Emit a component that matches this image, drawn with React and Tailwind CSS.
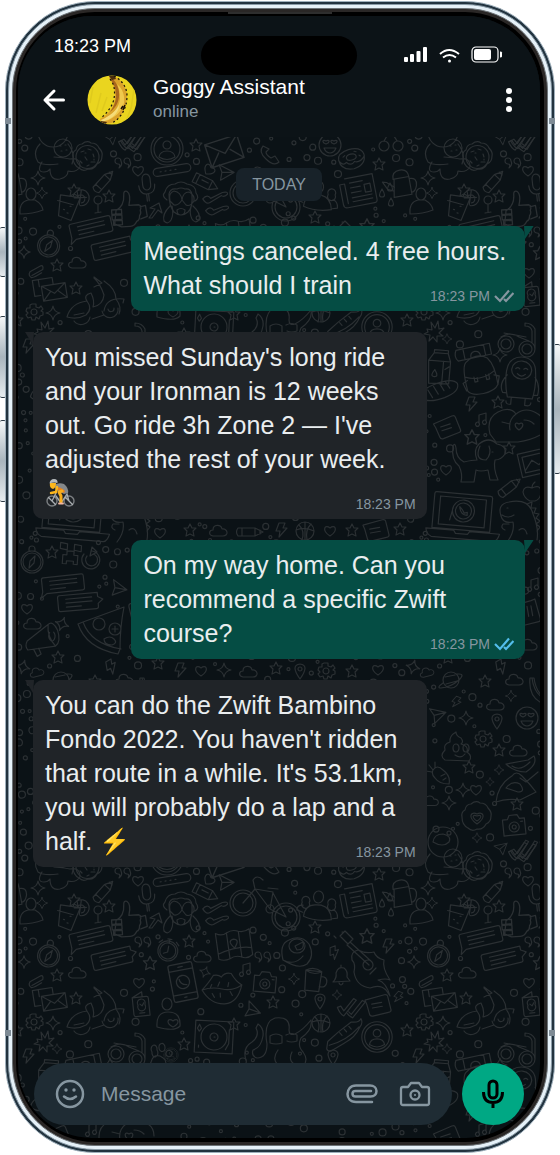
import React from "react";

const MESSAGES = [
  { id: 1, from: "me", text: "Meetings canceled. 4 free hours. What should I train", time: "18:23 PM", ticks: "text-[#8696a0]" },
  { id: 2, from: "bot", text: "You missed Sunday's long ride and your Ironman is 12 weeks out. Go ride 3h Zone 2 — I've adjusted the rest of your week.", rider: true, time: "18:23 PM" },
  { id: 3, from: "me", text: "On my way home. Can you recommend a specific Zwift course?", time: "18:23 PM", ticks: "text-[#53bdeb]" },
  { id: 4, from: "bot", text: "You can do the Zwift Bambino Fondo 2022. You haven't ridden that route in a while. It's 53.1km, you will probably do a lap and a half. ⚡", time: "18:23 PM" },
];

/* ---------- wallpaper ---------- */

// shape name -> [radius kept free of dots, path data around 0,0]
const SHAPES = {
  star: [8, "M0-6l2 4 4 0-3 3 1 5-4-2-4 2 1-5-3-3 4 0z"],
  sparkle: [8, "M0-7q1 6 7 7-6 1-7 7-1-6-7-7 6-1 7-7z"],
  heart: [7, "M0 5C-9-1-5-7 0-3 5-7 9-1 0 5z"],
  cloud: [11, "M-7 5c-5-1-4-6 0-6 0-6 8-6 9-1 6-1 7 7 1 7z"],
  bolt: [8, "M-2-7l6 0-2 5 4 0-8 9 1-6-4 0z"],
  plane: [9, "M-8-6l16 5-12 10 0-8zM8-1l-12 2"],
  quotes: [8, "M-2-3a3 3 0 1 0-3 3q3 0 1 4q4-3 2-7zM7-3a3 3 0 1 0-3 3q3 0 1 4q4-3 2-7z"],
  bar: [19, "M-15-4h30a4 4 0 0 1 0 8h-30a4 4 0 0 1 0-8zM-12 0h1M-7 0h1M-2 0h1M3 0h1"],
  profile: [17, "M-16 0a16 16 0 1 0 32 0a16 16 0 1 0-32 0M-13 0a13 13 0 1 0 26 0a13 13 0 1 0-26 0M-4-4a4 4 0 1 0 8 0a4 4 0 1 0-8 0M-8 8q1-6 8-6t8 6q-8 5-16 0"],
  cookie: [17, "M-15 0q-1-5 3-7 1-6 6-6 5-4 9-1 6 0 8 5 4 4 3 8 0 6-5 8-3 6-9 5-5 3-9-1-6-3-6-11zM-12 0a11 11 0 1 0 23 0a11 11 0 1 0-23 0M-7-5l3-1M0-8l3 1M5-3l1 3M-3 0l2 3M-8 4l2 2M3 5l4 0M-1 9l2-1M-3-4l1 0M6 3l0-1"],
  envelope: [18, "M-14-9h28v20h-28zM-14-9l14 12 14-12M-14 11l9-10M14 11l-9-10"],
  envelopes: [18, "M-10-5v-7h-6v16h6M-10-12h14v6M-8-5h24v15h-24zM-8-5l12 9 12-9M-8 10l8-8M16 10l-8-8"],
  handset: [12, "M-9-9q-5 6 3 13 8 8 13 3l-4-6-4 2q-5-3-5-6l3-3z"],
  pencil: [13, "M-12-4h17l8 4-8 4h-17q-3-4 0-8zM5-4v8M-8-4v8M10-2v4"],
  crayon: [14, "M-13-5h18l8 5-8 5h-18zM-9-5v10M5-5v10M-5-1h7"],
  mic: [13, "M-4-9a4 5 0 0 1 8 0v6a4 5 0 0 1-8 0zM-8-3q0 9 8 9t8-9M-1 6v7M1 6v7"],
  monkey: [21, "M-14-2q-6-4-2-8 2-8 10-8 6-4 12 0 9 1 9 9 4 5-1 8M-12-8q1-6 8-5 4-2 8 0 6-1 7 6 1 12-4 17-7 6-14 0-5-6-5-18M-11-1q-2-8 4-10 7 1 8 9-4 6-8 5zM1-2q1-8 7-8 6 3 5 9-4 6-8 4zM-4 8q4-3 8 0 0 5-4 5t-4-5zM-11 4q-8 8-6 15 4 4 7-1 3-6 1-14M12 4q8 7 6 14-4 4-7-1-3-6-1-12"],
  bike: [32, "M-30 6a13 13 0 1 0 26 0a13 13 0 1 0-26 0M-27 6a10 10 0 1 0 20 0a10 10 0 1 0-20 0M12 20a14 14 0 1 0 28 0a14 14 0 1 0-28 0M15 20a11 11 0 1 0 22 0a11 11 0 1 0-22 0M-17 6l12-14 15 20 16 8M-5-8l18 3-3 17M-5-8l-2-9q4-6 10 0M8-9l10 1M26 20l-13-24M6 12a4 4 0 1 0 8 0a4 4 0 1 0-8 0"],
  person: [14, "M-5-8a5 6 0 1 0 10 0a5 6 0 1 0-10 0M-11 12q-1-12 8-14l7 0q7 4 8 10-10 4-23 4z"],
  personHeart: [15, "M-7-11a5 6 0 1 0 10 0a5 6 0 1 0-10 0M-12 12q-1-15 11-15 13 0 12 14-5 6-23 1zM4 12c-8-4-5-10 0-6 5-4 8 2 0 6z"],
  people: [22, "M-5-10a5 6 0 1 0 10 0a5 6 0 1 0-10 0M-14 10q1-12 12-12h5q10 2 11 14q-16 3-28-2zM-16-4a4 4 0 1 0 7 0a4 4 0 1 0-7 0M10-3a4 4 0 1 0 7 0a4 4 0 1 0-7 0M-15 6l-6-2q0-5 6-5M15 11l5-1q0-7-5-8"],
  drink: [17, "M-9-10h20l-6 24-13-3zM-11-4l16 2M-4 4h1M2 0h1M0 7h1M4-11a8 8 0 1 1 8 9M8-10a4 4 0 1 1 5 5M11-17v14M5-9l12-2"],
  wine: [7, "M-4-5a4 4 0 1 0 8 0a4 4 0 1 0-8 0M0-1v8M-3 8l6-1"],
  thumb: [18, "M-10 0q8-4 8-14 0-4 3-3 4 3 1 13h9q3 1 1 5 1 3-1 5 0 4-3 5-2 4-6 4h-8l-6-3zM-14-1h9v4h-9zM-14 4h9v4h-9zM-13 9h8v4h-8zM12-2l5-1 1 10-6 2"],
  uparrow: [9, "M-6 7L0-2l-5-1 9-5 3 10-4-3-6 8z"],
  spoons: [16, "M-13-4q5-5 8 0l12-5q6-1 5 2-4 3-6 1l-12 6q-4 2-7-4zM-11 8q5-5 8 0l10-3q6-1 5 2-4 3-6 1l-9 4q-4 2-8-4z"],
  compass: [15, "M-11 3a11 11 0 1 0 22 0a11 11 0 1 0-22 0M-9 3a9 9 0 1 0 18 0a9 9 0 1 0-18 0M3-3l-1 7-5 5 1-7zM-3-10a3 3 0 1 1 6 0v2h-6z"],
  chatL: [22, "M-18-8h38q2 0 2 2v12q0 2-2 2h-36q-3 2-6 4l2-6v-12q0-2 2-2zM-12-4h27M-12 0h27M-12 4h15"],
  chatR: [22, "M18-8h-38q-2 0-2 2v12q0 2 2 2h36q2 0 2-2v-3l5-4-5-3v-4zM-14-4h26M-14 0h26M-14 4h15"],
  stopwatch: [13, "M-10 1a10 10 0 1 0 20 0a10 10 0 1 0-20 0M-8 1a8 8 0 1 0 16 0a8 8 0 1 0-16 0M-2-11h4M0-11v3M0-4v6l-4 2M7-9l3 3M-7-9l-3 3"],
  map: [20, "M-17-13q6 4 11 1 6-3 12 0 6 2 11-1v26q-6 4-11 1-6-3-12 0-6 2-11-1zM-6-12v26M6-12v26M-17 8q20-6 34-2M0 4q-7-8 0-9 7 1 0 9z"],
  phone: [18, "M-9-17h18q2 0 2 2v30q0 2-2 2h-18q-2 0-2-2v-30q0-2 2-2zM-11-11h22M-11 11h22M-6 0a6 6 0 1 0 12 0a6 6 0 1 0-12 0M-3-3q0 5 6 6M-2-14h4M-1 14h2"],
  lips: [20, "M-20 0q8-8 12-14 5-1 8 2 4-5 10-3 4 8 10 12-5 18-18 18-14 0-22-15zM-20 0q10-3 20 0t20-3M-12-1l2-4M-4-3l2-4M6-2l1-4M-10 4l2 4M-2 4v4M8 3l2 4"],
  note: [6, "M-3 4v-8l7-2v8M-3 4a2 2 0 1 1-3 0q2-2 3 0M4 2a2 2 0 1 1-3 0q2-2 3 0"],
  camera: [14, "M-11-6h5l2-4h8l2 4h5v16h-22zM-5 2a5 5 0 1 0 10 0a5 5 0 1 0-10 0M-2 2a2 2 0 1 0 4 0a2 2 0 1 0-4 0M7-3h2"],
  clip: [9, "M-6 3l12-3q2-4-1-4l-12 3q-3 3 0 6 2 1 11-2"],
  scooter: [30, "M-29 16q4-14 20-16 6 8-1 14-9 5-19 2zM-22 14l10-2M-22 20a9 9 0 0 0 16-4M-9 0q-4-6 4-8 4 8 2 14 10-2 11-12-4-12-10-17M-2-24l8 6-8 4M8-20q12 8 12 18 6 8 3 15M8 10q2-14 20-12l-1 4M6 10a8 8 0 1 0 16-3M12 8a3 3 0 1 0 6-1M-4 18l12-4"],
  passport: [13, "M-8-8h14q2 0 2 2v17h-14q-2 0-2-2zM-8-8l10-5v5M-3 0a4 4 0 1 0 7 0a4 4 0 1 0-7 0M-2 8h5M-1-1l2 2 2-3"],
  turntable: [23, "M-19-16h38v32h-38zM-13 0a13 13 0 1 0 26 0a13 13 0 1 0-26 0M-4 0a4 4 0 1 0 8 0a4 4 0 1 0-8 0M0 0h1M15-8v14l-3 6M-15-12l2 4-2 3-2-3zM-15 9v2"],
  tentacle: [28, "M-26 22q-4-12 6-18 8-6 4-14l2-4q6 4 5 12-2 12-10 14-2 6 4 8 10 0 10-14-4-22 8-26 16-2 14 12 0 6 6 4 8-4 16-14 2 10-10 18-4 8 2 14 6 8 0 14M-2-2q6-4 12 0v7q-6 2-12 0zM14-3q6-3 11 0v6q-6 2-10 0M6 12q-6 8-1 14M20 14q-4 8 2 12"],
  gear: [9, "M-2-8h4l0 3 3 1 2-2 2 3-2 2 2 1v3l-3 1-1 3-3-2-1 3h-3l-1-3-3 1-2-3 2-2-2-2 1-3 3 0 0-3zM-3 0a3 3 0 1 0 6 0a3 3 0 1 0-6 0"],
  burst: [10, "M-8-2l5 1-1-8 4 6 3-7 1 8 5-1-5 5 4 3-6 0 0 6-4-5-4 4 1-6-6-1 4-2z"],
  glasses: [20, "M-18 4a8 8 0 1 0 16 0a8 8 0 1 0-16 0M-15 4a5 5 0 1 0 10 0a5 5 0 1 0-10 0M3 9a8 8 0 1 0 16 0a8 8 0 1 0-16 0M6 9a5 5 0 1 0 10 0a5 5 0 1 0-10 0M-15-3q10-6 18 0l10 4M-12-7l22 4M19 9v-20q-3-6-10-6l0 3q6 0 7 5v12"],
  paw: [14, "M-8-3a3 4 0 1 0 5-2a3 4 0 1 0-5 2M-1-7a3 4 0 1 0 6-1a3 4 0 1 0-6 1M6-2a3 3 0 1 0 6 1a3 3 0 1 0-6-1M-9 7q2-8 9-6 8 4 5 9-4 3-8 1-8 1-6-4z"],
  backpack: [28, "M-15 16q-1-24 4-28 12-8 22 0 6 8 5 28-4 6-16 6t-15-6zM-15 2q15 8 30 0M-6 4v5h3v-4M6 4v5h3v-5M-13 6l-5 2 2 8M14 6l5 2-3 8M-18-26h34v11h-34q-4-5 0-11zM-11-26v11M10-26v11M-5-15q0-6 5-6t5 6"],
  milk: [20, "M-11-7l5-8h14l3 8v22l-20 1zM-11-7h22M-6-15v-3h14v3M4-7v23M-4 2q-5 7 0 7t0-7M6 1l4-3"],
  yeti: [27, "M-12 20q-4-14-3-26 1-14 14-15 14 0 15 14 2 14-1 27M-10-8a10 9 0 1 0 20 0a10 9 0 1 0-20 0M-6-9q2-2 4 0M2-9q2-2 4 0M-4-4q4 4 8 0M-14-2q-8 10-3 18l4 0M14-2q6 8 4 18l-4 0M-8 21v6q-5 1-5-3M6 21v6q6 1 6-3M-12 20h24"],
  baguette: [20, "M-20 4q2-8 18-12 16-4 20 2 2 8-14 13-18 5-24-3zM-12-2l4 8M-6-5l4 8M0-8l4 8M6-9l4 7"],
  doc: [15, "M-12-7l20-2q3 0 3 2l1 14q0 2-3 2l-16 1q-3 0-3-3l-1-10zM-6-2h10M-6 2h10"],
  hands: [27, "M-26 8q-4-16 8-22 12-6 18 2 10-8 22 0 6 4 6 12M-26 8l6 8q14 0 22 0 14-2 24-8M0-12q-8 6-6 16M-14-4l8 2M8-6q6 0 10 4M3 4c-6-4-4-9 0-6 4-3 6 2 0 6z"],
  dog: [26, "M-17 18q2-8-2-16-8-6-6-20 2-4 3 2 0 10 8 14 8-2 13-2-4-10 2-16 10-8 18 0 10 2 8 10-4 6-10 6-2 8 3 20h-8l-2-10q-8 2-12 0l-2 12h-10zM2-18q-6 14 6 14 6-6 3-14M14-12h1"],
  picture: [20, "M-18-10h34v24h-34zM-14-6h26v16h-26zM-14 8l9-9 6 6 5-4 6 6"],
  apple: [11, "M0-5q8-4 9 3 0 8-6 10h-5q-6-3-7-9 1-7 9-4zM0-5q0-4 3-6"],
  laptop: [35, "M-28-22h54q2 0 2 2v34h-58v-34q0-2 2-2zM-24-18h46v28h-46zM-36 15h28l2 3h12l2-3h30q-2 8-6 8h-62q-5-2-6-8zM-11-5a11 11 0 1 0 22 0a11 11 0 1 0-22 0l-2 10M-8-5a8 8 0 1 0 16 0a8 8 0 1 0-16 0M-4-9q1 8 8 8l0-3-3 1-2-3z"],
  dino: [26, "M-16-6q-4-12 8-14 20-4 24 12 6 14 4 26M-16-6q2 8 12 6 2 10-6 20M-8 2h-6q-3 4 2 6M-10-14h1M-15-7q6 4 12 0M10-18l5-2-1 6 5 0-2 5 5 1-3 4 4 3-4 3 4 3-3 4M2 8q6-4 8 4"],
  creeper: [14, "M-10-10l7 1v6l-7-1zM4-9l7 1v6l-7-1zM-3-2h7v4h4v9h-4v-3h-7v3h-4v-9h4z"],
  reload: [12, "M-7-5a9 9 0 1 0 8-3M-4-3a6 6 0 1 0 6-2M1-12l5 5-7 4z"],
  pizza: [26, "M-23-8q8 24 40 30l2-5M-23-8l5-2q8 22 38 27M-18-10l41-15q-4 20-4 42M-8-8a6 6 0 1 0 12 0a6 6 0 1 0-12 0M8-3a6 6 0 1 0 12 0a6 6 0 1 0-12 0M3 7q6-4 10 0t-2 6q-8 0-8-6M14-6v6M11-3h6"],
  megaphone: [17, "M-15 2q-3 5 0 9l28-2q-8-10-6-22zM7-13q5-4 9 6 3 12-3 16M8-5a3 5 0 1 0 4 0M-9 11l3 7 4-2-2-6"],
  planet: [12, "M-8 0a8 8 0 1 0 16 0a8 8 0 1 0-16 0M-8 3q-7 5-2 5 10-1 18-8 6-6 0-6l-3 0M-6-3l10-2M-5 4l11-3"],
  ball: [10, "M-9 0a9 9 0 1 0 18 0a9 9 0 1 0-18 0M-6-6q6 6 3 15M6-7q-6 6-4 16M-9-1q9-3 18 1M0-9v18"],
  shoe: [20, "M-18 4q6-4 12-8l14-8q8 2 10-2 2 4-2 8-6 10-18 14l-14 6q-4 0-4-3zM-17 8q18-2 32-14M-5-3l2 3M0-6l2 3M5-8l2 3"],
  pin: [8, "M0 8q-10-14 0-15 10 1 0 15zM-2-2a2 2 0 1 0 4 0a2 2 0 1 0-4 0"],
  ticks: [13, "M-12 4l3-2 4 4 7-14 3 1-9 18q-4-1-8-7zM0 6l3 2 8-16 3 1-9 18q-4-1-6-3"],
  smiley: [12, "M-11 0a11 11 0 1 0 22 0a11 11 0 1 0-22 0M-4-1c-5-2-3-5 0-3 3-2 5 1 0 3zM4-1c-5-2-3-5 0-3 3-2 5 1 0 3zM-6 3h12q-2 5-6 5t-6-5z"],
  donut: [15, "M-13-3q0-7 12-8 13 0 14 8 0 11-13 12-13-1-13-12zM-5-3q0-3 5-3t5 3-5 3-5-3M-13-2q3 6 7 3 4 5 8 1 5 3 11-3M-8-5l2-1M4-8l2 1M8-3l1 1"],
  cherries: [12, "M-10 3a5 5 0 1 0 10 0a5 5 0 1 0-10 0M4 3a5 5 0 1 0 10 0a5 5 0 1 0-10 0M-5-2q4-6 4-10 6 4 9 10"],
  news: [22, "M-14-14h28v26q0 3-3 3h-27q-4 0-4-4v-20h5v20M-10-9h13M-10-4h10M-10 1h10M-10 6h20M-10 10h20M4-5h6v8h-6z"],
  can: [17, "M-6-6h15v18h-18zM-7 2l-7-6-4-1 4 8 6 3M-7-6q0-8 8-8t8 8M9-4q8 0 6 8-2 6-6 6"],
  drop: [5, "M0-5q-5 8 0 8t0-8z"],
  guitar: [34, "M-22-26l5-5 8 8-5 5zM-12-20l22 20M-15-17l22 20M-4-12q-8 2-6 10 4 4 2 12 2 14 16 16 10-4 16 2 4 6 4 6-4-14-12-16 8-2 12 0-8-12-6-20-8-2-10-8-8 2-16-2zM1 3a5 5 0 1 0 10 0a5 5 0 1 0-10 0M8 12l6-6M-20-30h1M-26-24l-2-2"],
  bird: [17, "M-14 8q-4-16 6-20 12-6 20 4 6 12-2 20-8 6-24-4zM-8-6a8 7 0 1 0 16 0a8 7 0 1 0-16 0M-2-6l8-4q2 8-6 8zM-14 8q12 6 20-4"],
  cup: [14, "M-9-8h16l-1 20h-14zM-9-8q8-5 16 0-8 5-16 0M7-3q6-1 6 5t-7 5"],
  bell: [10, "M-8 6q4-4 3-9 2-7 8-5 4 3 3 9l3 4zM-2 7q2 4 4 0M0-9v-2"],
  poop: [19, "M-13 14q-6-4 0-10-2-6 5-8-1-6 6-10 0 4 5 6 3 4 0 6 8 2 6 8 6 4 2 9zM-5 2a3 4 0 1 0 6 0a3 4 0 1 0-6 0M5 2a3 4 0 1 0 6 0a3 4 0 1 0-6 0M-3 9q6 4 10-1"],
  carrot: [13, "M-8-4q4-6 10 0 8 6 6 14-10 0-14-6-4-4-2-8zM-8-4l-4-5M-6-6l0-6M-9-2l-6-1M0 2l4-2M2 6l3-2"],
  heartCookie: [18, "M-15 0q-1-5 3-7 1-6 6-6 5-4 9-1 6 0 8 5 4 4 3 8 0 6-5 8-3 6-9 5-5 3-9-1-6-3-6-11zM0 7C-10 0-6-6 0-3 6-6 10 0 0 7zM0 4C-6 0-4-3 0-1 4-3 6 0 0 4z"],
  astronaut: [30, "M-22-24a15 15 0 1 0 30 0a15 15 0 1 0-30 0M-17-24q1-8 10-8 9 2 6 8-6 6-16 0zM-20-12q-8 8-2 18 6 4 20 2M8-12q8 10 4 20M-6-8a9 9 0 1 0 18 0a9 9 0 1 0-18 0M0-10h1M5-11h1M1-5h1M6-6h1M-18 6q-6 10 2 10 4 0 6-3 0 12 10 10 8-2 8-8 8 2 12-4 0-10-10-8-12-2-16-2"],
  cap: [14, "M-14-2l22-4 6-4q4 8-8 16-12 0-20-8zM-8 0q8 6 18-4"],
  rocket: [22, "M-20 16q2-18 16-26 4-6 10 0 8 8 14 16-8 4-16 8-12-2-24 2zM-10 2q6-8 14-4 6 8-2 8-6-2-12-4M4-8l6 4 12-10"],
  banana: [14, "M-8-14q-2 20 14 26 6-1 4-4-12-6-14-22zM-6-14q2 16 14 22"],
};

const DOODLES = [
  ["astronaut", 60, 156], ["cookie", 88, 157], ["ticks", 131, 140, 10], ["profile", 167, 149], ["star", 196, 145],
  ["envelope", 224, 150, -18, 1.2], ["handset", 272, 155], ["quotes", 123, 164], ["heart", 138, 171], ["bar", 172, 170, -9],
  ["heart", 209, 170, 40], ["plane", 226, 172, 10], ["pencil", 104, 181, -48], ["crayon", 206, 183, 26], ["sparkle", 38, 178],
  ["mic", 147, 188, -6], ["monkey", 181, 202], ["star", 74, 190], ["star", 109, 196], ["bike", 260, 187],
  ["person", 31, 202], ["sparkle", 42, 193, 0, 0.8], ["drink", 68, 206, 8], ["wine", 98, 205], ["thumb", 127, 210, -4, 1.1],
  ["uparrow", 155, 211], ["spoons", 216, 202, -4], ["compass", 49, 243, 8], ["chatL", 90, 228, -13], ["chatR", 114, 248, -13],
  ["cloud", 79, 263], ["star", 57, 265], ["quotes", 143, 233], ["stopwatch", 168, 240, 10], ["star", 189, 231],
  ["map", 234, 234, -8], ["cloud", 204, 247], ["sparkle", 205, 262, 20, 0.8], ["phone", 183, 272, -11, 1.1], ["heart", 139, 273],
  ["star", 150, 253, 0, 1.1], ["lips", 222, 279, -3], ["note", 246, 259], ["camera", 265, 272, 5], ["quotes", 263, 248],
  ["clip", 37, 271, -15], ["envelopes", 50, 290, -9], ["star", 76, 288], ["scooter", 96, 301], ["passport", 141, 295, -6],
  ["personHeart", 169, 305], ["star", 273, 292], ["plane", 253, 300, 30], ["turntable", 214, 327, 3], ["star", 234, 314],
  ["tentacle", 272, 328], ["gear", 34, 312], ["sparkle", 53, 313], ["burst", 45, 331], ["sparkle", 57, 339, 0, 0.7],
  ["glasses", 126, 340], ["paw", 160, 345], ["profile", 171, 345, 0, 0.45], ["star", 184, 334], ["bolt", 28, 346],
  ["smiley", 330, 145], ["donut", 352, 160, -14], ["star", 379, 164], ["cherries", 389, 143], ["news", 361, 190, -11],
  ["can", 401, 184, -10], ["drop", 382, 194], ["drop", 390, 188], ["drop", 391, 203], ["people", 318, 197, 3],
  ["star", 315, 217], ["star", 367, 226, 0, 1.2], ["bolt", 388, 236], ["guitar", 362, 252], ["bird", 297, 242],
  ["bolt", 334, 243, -20, 0.9], ["cup", 314, 269, 6], ["bell", 341, 266], ["sparkle", 294, 269, 0, 0.8], ["sparkle", 337, 285, 0, 0.7],
  ["sparkle", 24, 252, 0, 0.9], ["pin", 320, 291], ["ticks", 350, 296, 12], ["doc", 378, 295, -10], ["bolt", 398, 287, 20, 0.8],
  ["ball", 321, 313], ["shoe", 345, 325, -8], ["profile", 377, 327, 0, 0.95], ["star", 407, 320], ["pin", 333, 347],
  ["backpack", 479, 372, -12], ["milk", 439, 368, 5], ["sparkle", 500, 355], ["yeti", 521, 378, 5], ["baguette", 440, 391, -5],
  ["bolt", 471, 404], ["star", 498, 402], ["note", 482, 419], ["doc", 447, 427, -18], ["hands", 516, 426],
  ["star", 472, 437, 0, 1.2], ["star", 509, 448], ["dog", 478, 464], ["picture", 537, 460, -13], ["pencil", 510, 487, -38],
  ["heart", 446, 470], ["apple", 532, 493], ["laptop", 463, 516, 5], ["dino", 517, 522], ["heart", 160, 533],
  ["star", 190, 530], ["cloud", 220, 531], ["pencil", 250, 532], ["bolt", 281, 530], ["ball", 305, 531], ["heart", 330, 531],
  ["star", 352, 530], ["doc", 376, 530, -10], ["star", 400, 529],
  ["compass", 32, 559], ["star", 52, 552], ["creeper", 70, 553, 4], ["reload", 91, 559], ["chatL", 62, 584, -6],
  ["chatR", 80, 602, -5], ["plane", 119, 588, 20], ["pizza", 101, 632], ["heart", 27, 609], ["cloud", 34, 624],
  ["sparkle", 62, 624, 20], ["megaphone", 42, 638, -4], ["star", 58, 657], ["sparkle", 23, 667, 15], ["cloud", 38, 672, -15, 0.8],
  ["planet", 61, 680], ["bolt", 111, 667, -30], ["cloud", 126, 680], ["star", 95, 681],
  ["star", 158, 663], ["bolt", 180, 670], ["heart", 201, 671], ["sparkle", 224, 670], ["cloud", 250, 672], ["star", 276, 668],
  ["pin", 300, 671], ["gear", 326, 671], ["star", 352, 671], ["heart", 378, 670],
  ["note", 144, 584], ["doc", 140, 612, 80], ["cloud", 140, 645],
  ["bolt", 456, 702, 20, 0.8], ["sparkle", 511, 696, 0, 0.8], ["cloud", 497, 705], ["plane", 438, 714, -5], ["sparkle", 466, 718],
  ["pin", 497, 721], ["smiley", 527, 718], ["banana", 538, 692], ["poop", 458, 746], ["gear", 483, 739], ["star", 499, 750],
  ["cloud", 520, 751], ["cap", 520, 766], ["carrot", 441, 774], ["star", 469, 767], ["sparkle", 499, 770, 0, 0.7],
  ["sparkle", 490, 782, 0, 0.6], ["rocket", 516, 786], ["star", 517, 804], ["sparkle", 449, 803], ["heartCookie", 477, 817],
  ["camera", 514, 825, -6], ["sparkle", 477, 838, 0, 0.7], ["plane", 502, 847, -30, 0.8], ["ticks", 523, 848, 5],
  ["cloud", 432, 801, 0, 0.9], ["sparkle", 463, 790], ["heart", 476, 790],
];

const TILE_W = 390;
const TILE_H = 710;

// the little rings between the drawings, same result on every render
const DOTS = (() => {
  let seed = 7;
  const rand = () => {
    seed = (seed * 16807) % 2147483647;
    return seed / 2147483647;
  };
  const taken = DOODLES.map(([name, x, y, , s = 1]) => ({ x, y, r: SHAPES[name][0] * s * 0.9 }));
  const dots = [];
  for (let i = 0; i < 20000 && dots.length < 800; i++) {
    const r = [1.5, 2, 3, 3.5][Math.floor(rand() * 4)];
    const x = 18 + rand() * TILE_W;
    const y = 137 + rand() * TILE_H;
    const free = [...taken, ...dots].every((t) => {
      const dx = Math.abs(t.x - x) % TILE_W;
      const dy = Math.abs(t.y - y) % TILE_H;
      return Math.hypot(Math.min(dx, TILE_W - dx), Math.min(dy, TILE_H - dy)) > t.r + r + 2;
    });
    if (free) dots.push({ x, y, r });
  }
  return dots;
})();

function Wallpaper() {
  return (
    <svg className="absolute inset-0 h-full w-full" aria-hidden="true">
      <defs>
        <g id="doodles" fill="none" stroke="#2b3033" strokeWidth="1.2" strokeLinejoin="round" strokeLinecap="round">
          {DOODLES.map(([name, x, y, rot = 0, s = 1], i) => (
            <path key={i} d={SHAPES[name][1]} transform={`translate(${x - 18} ${y - 137}) rotate(${rot}) scale(${s})`} />
          ))}
          {DOTS.map((d, i) => (
            <circle key={i} cx={d.x - 18} cy={d.y - 137} r={d.r} />
          ))}
        </g>
      </defs>
      {[-1, 0, 1].map((col) =>
        [-1, 0, 1].map((row) => <use key={`${col}${row}`} href="#doodles" x={col * TILE_W} y={row * TILE_H} />)
      )}
    </svg>
  );
}

/* ---------- icons ---------- */

function Ticks({ className }) {
  return (
    <svg width="20" height="14" viewBox="0 0 20 14" className={className} fill="none" stroke="currentColor" strokeWidth="2.2" aria-hidden="true">
      <path d="M1 7l5 5L15 1.500M10 10l2 2L19.500 4" />
    </svg>
  );
}

function StatusIcons() {
  return (
    <svg width="100" height="18" viewBox="0 0 100 18" fill="#fff" aria-hidden="true">
      <rect x="1" y="12" width="4" height="5" rx="1" />
      <rect x="7" y="9" width="4" height="8" rx="1" />
      <rect x="13.500" y="6" width="4" height="11" rx="1" />
      <rect x="20" y="2" width="4" height="15" rx="1" />
      <g fill="none" stroke="#fff" strokeWidth="2">
        <path d="M37 9q9-8 19 0M40 12.500q6.500-5 13 0" />
      </g>
      <circle cx="46.500" cy="16" r="1.500" />
      <rect x="69" y="2" width="26" height="15" rx="4" fill="none" stroke="#fff" strokeWidth="1.200" />
      <rect x="71" y="4" width="17" height="11" rx="2" />
      <path d="M97 6.500q2 0 2 1v4q0 1-2 1z" />
    </svg>
  );
}

function Avatar() {
  return (
    <svg width="50" height="50" viewBox="0 0 50 50" role="img" aria-label="Goggy Assistant">
      <defs>
        <clipPath id="avatar-clip"><circle cx="25" cy="25" r="24.500" /></clipPath>
      </defs>
      <g clipPath="url(#avatar-clip)">
        <rect width="50" height="50" fill="#ead51f" />
        <path d="M14 18L9 38M20 22l-5 14M47 14l-3 20M45 30l-5 14M6 12L3 28" stroke="#dfca1d" strokeWidth="1.500" />
        <path d="M22 1l5 0c9 5 13 12 13 20 0 13-7 23-15 27l-10 1-2-5c9-5 15-13 15-22 0-8-2-14-6-19z" fill="#dba32b" />
        <path d="M30 9c6 5 8 12 7 19-2 8-9 15-18 18 7-7 13-14 14-22 0-6-1-11-3-15z" fill="#f0c94d" />
        <path d="M25 3c5 5 8 12 7 19-1 7-4 11-9 15 4-6 6-11 6-16 0-7-2-12-5-16z" fill="#a9671c" />
        <path d="M14 45c9-4 15-9 18-15 0 8-7 14-17 17z" fill="#f5dc7a" />
        <path d="M22 1l5-1 2 4-4 1zM14 46l6 1-2 3-5-1z" fill="#4a2d0e" />
        <path d="M27 1c9 5 13 12 13 20 0 13-7 23-15 27M23 4c5 6 5 13 4 20-2 8-7 14-13 19" fill="none" stroke="#17110a" strokeWidth="1.200" strokeDasharray="2 2.500" />
        <path d="M38 30l-2 5M36 31l-2 3" stroke="#17110a" strokeWidth="1.500" />
      </g>
    </svg>
  );
}

function Rider() {
  return (
    <svg width="30" height="30" viewBox="0 0 30 30" className="inline-block align-[-6px]" role="img" aria-label="cyclist" fill="none" strokeLinecap="round">
      <circle cx="7" cy="23" r="5" stroke="#7b7f82" strokeWidth="1.400" />
      <circle cx="24" cy="23" r="5" stroke="#7b7f82" strokeWidth="1.400" />
      <path d="M3.500 19.500l7 7M20.500 19.500l7 7M7 23l4-8M11 18l5 7 6-9 2 7" stroke="#a9aeb1" strokeWidth="1.300" />
      <path d="M9 7q5-3 10-1 5 4 4 9l-4 1-8-4z" fill="#85888a" />
      <path d="M11 9q5 0 9 4l-1 2-6-3z" fill="#e8801f" />
      <path d="M12 9l-1 5-5 1" stroke="#fdb71c" strokeWidth="2.400" strokeLinejoin="round" />
      <path d="M17 13l-3 1 2 4 0 6" stroke="#f9ae1b" strokeWidth="3" strokeLinejoin="round" />
      <path d="M14 25.500l4 0" stroke="#f0b8a4" strokeWidth="1.800" />
      <path d="M5 5h6q0 5-3 6-4-1-3-6z" fill="#fdb71c" />
      <path d="M4.500 5.500Q5 1 9 1t3.500 4q-4-1-8 .5z" fill="#b4b9bc" />
    </svg>
  );
}

/* ---------- chat ---------- */

function Bubble({ message }) {
  const mine = message.from === "me";
  return (
    <li className={mine ? "flex justify-end" : "flex justify-start"}>
      <div
        className={
          mine
            ? "relative w-4/5 rounded-[10px] bg-[#054d44] px-3 pt-2 pb-[9px]"
            : "relative w-4/5 rounded-[10px] bg-[#202428] px-3 pt-2 pb-[9px]"
        }
      >
        {mine ? (
          <svg className="absolute top-0 -right-[9px]" width="10" height="13" viewBox="0 0 10 13" aria-hidden="true">
            <path d="M0 0h9q1 0 0 1L1 13z" fill="#054d44" />
          </svg>
        ) : (
          <svg className="absolute top-0 -left-2" width="9" height="13" viewBox="0 0 9 13" aria-hidden="true">
            <path d="M9 0H0l8 13z" fill="#202428" />
          </svg>
        )}
        <p className="text-[25px] leading-[34px] text-[#e9edef]">
          {message.text}
          {message.rider && <> <Rider /></>}
        </p>
        <div className="absolute right-[11px] bottom-[6px] flex items-center gap-1 text-[14px] leading-[18px] text-[#8696a0]">
          <time>{message.time}</time>
          {mine && <Ticks className={message.ticks} />}
        </div>
      </div>
    </li>
  );
}

function Header() {
  return (
    <header className="relative bg-[#0c1317] pb-3">
      <div className="grid h-[59px] grid-cols-[1fr_156px_1fr] items-start">
        <span className="pt-5 pl-9 text-[18px] leading-5 text-white">18:23 PM</span>
        <div className="mt-5 h-[39px] rounded-full bg-black" />
        <div className="flex justify-end pt-[29px] pr-[37px]">
          <StatusIcons />
        </div>
      </div>
      <div className="flex h-[50px] items-center pr-6 pl-6">
        <button type="button" aria-label="Back" className="text-white">
          <svg width="24" height="24" viewBox="0 0 24 24" fill="none" stroke="currentColor" strokeWidth="3" strokeLinecap="round" strokeLinejoin="round">
            <path d="M12 3l-9 9 9 9M3 12h18.500" />
          </svg>
        </button>
        <div className="ml-[21px]">
          <Avatar />
        </div>
        <div className="ml-4 flex-1">
          <h1 className="text-[21px] leading-[24px] text-white">Goggy Assistant</h1>
          <p className="text-[17px] leading-[26px] text-[#8696a0]">online</p>
        </div>
        <button type="button" aria-label="Menu" className="text-white">
          <svg width="14" height="28" viewBox="0 0 14 28" fill="currentColor">
            <circle cx="7" cy="5" r="3" />
            <circle cx="7" cy="14" r="3" />
            <circle cx="7" cy="23" r="3" />
          </svg>
        </button>
      </div>
    </header>
  );
}

function Composer() {
  return (
    <form className="flex items-center gap-[10px] px-4 pb-[13px]" onSubmit={(e) => e.preventDefault()}>
      <div className="flex h-[62px] min-w-0 flex-1 items-center rounded-full bg-[#1f2c34] pr-[21px] pl-5 text-[#8696a0]">
        <button type="button" aria-label="Emoji">
          <svg width="32" height="32" viewBox="0 0 32 32" fill="none" stroke="currentColor" strokeWidth="2.500">
            <circle cx="16" cy="16" r="13" />
            <circle cx="12" cy="12" r="1.700" fill="currentColor" stroke="none" />
            <circle cx="20" cy="12" r="1.700" fill="currentColor" stroke="none" />
            <path d="M10 18.500q6 5 12 0" strokeLinecap="round" />
          </svg>
        </button>
        <input
          type="text"
          aria-label="Message"
          placeholder="Message"
          className="ml-[15px] w-0 min-w-0 flex-1 bg-transparent text-[21px] leading-7 text-white outline-none placeholder:text-[#8696a0]"
        />
        <button type="button" aria-label="Attach">
          <svg width="32" height="20" viewBox="0 0 32 20" fill="none" stroke="currentColor" strokeWidth="2.500" strokeLinecap="round">
            <path d="M26 18H10C4 18 1.500 14 1.500 10S4 1.500 10 1.500h14c4 0 6.500 2.500 6.500 5.500s-2 5.500-6 5.500H9.500c-2 0-3-1-3-2.800S7.500 7 9.500 7H25" />
          </svg>
        </button>
        <button type="button" aria-label="Camera" className="ml-[21px]">
          <svg width="32" height="28" viewBox="0 0 32 28" fill="none" stroke="currentColor" strokeWidth="2.300" strokeLinejoin="round">
            <path d="M4 7h5l3-4h8l3 4h5q2 0 2 2v14q0 2-2 2H4q-2 0-2-2V9q0-2 2-2z" />
            <circle cx="16" cy="15" r="4.500" />
            <circle cx="16" cy="15" r="1" fill="currentColor" stroke="none" />
          </svg>
        </button>
      </div>
      <button type="button" aria-label="Record voice message" className="flex size-[62px] shrink-0 items-center justify-center rounded-full bg-[#00a884] text-black">
        <svg width="24" height="32" viewBox="0 0 24 32" fill="none" stroke="currentColor" strokeWidth="3">
          <rect x="8" y="3" width="8" height="17" rx="4" />
          <path d="M2.500 14q0 10.500 9.500 10.500t9.500-10.500M12 25v5" />
        </svg>
      </button>
    </form>
  );
}

function SideButton({ className }) {
  return (
    <div
      className={`absolute w-[6px] rounded-[2px] border-y border-[#2a3843] bg-linear-to-b from-[#f4f7f8] via-[#a9b5bd] to-[#e6ecef] ${className}`}
    />
  );
}

export default function App() {
  return (
    <main className="relative flex min-h-screen bg-white px-[5px] pt-px pb-[2px] font-['Liberation_Sans',Arial,sans-serif]">
      <SideButton className="top-[227px] left-0 h-[50px]" />
      <SideButton className="top-[316px] left-0 h-[82px]" />
      <SideButton className="top-[420px] left-0 h-[82px]" />
      <SideButton className="top-[344px] right-0 h-[130px]" />

      {/* metal rim, drawn as nested rings */}
      <div className="relative flex flex-1 rounded-[90px] border border-[#9fb0bc] bg-[#22333f] p-[2px]">
        <div className="flex flex-1 rounded-[87px] border border-[#8b9ca8] bg-[#e6f1f8] p-[3px]">
          <div className="flex flex-1 rounded-[83px] border border-[#6d7377] bg-[#2a2726] p-[3px]">
            <div className="relative flex flex-1 rounded-[79px] bg-black pt-1 pr-1 pb-1 pl-[2px]">
              <div className="absolute top-0 left-1/2 h-[2px] w-[104px] -translate-x-1/2 bg-[#2e2e2e]" />
              <div className="flex flex-1 flex-col overflow-hidden rounded-[74px] bg-[#0b1216]">
                <Header />
                <div className="relative flex flex-1 flex-col">
                  <Wallpaper />
                  <div className="relative flex flex-1 flex-col">
                    <ol className="flex flex-1 flex-col gap-[21px] px-[15px] pt-[31px]">
                      <li className="mb-1 self-center rounded-lg bg-[#182229] px-4 text-[16px] leading-[33px] text-[#8696a0]">TODAY</li>
                      {MESSAGES.map((m) => (
                        <Bubble key={m.id} message={m} />
                      ))}
                    </ol>
                    <Composer />
                  </div>
                </div>
              </div>
            </div>
          </div>
        </div>
        <div className="absolute top-[116px] -left-px h-[6px] w-[6px] bg-[#7e8b95]" />
        <div className="absolute top-[116px] -right-px h-[6px] w-[6px] bg-[#7e8b95]" />
        <div className="absolute bottom-[116px] -left-px h-[6px] w-[6px] bg-[#7e8b95]" />
        <div className="absolute -right-px bottom-[116px] h-[6px] w-[6px] bg-[#7e8b95]" />
      </div>
    </main>
  );
}
